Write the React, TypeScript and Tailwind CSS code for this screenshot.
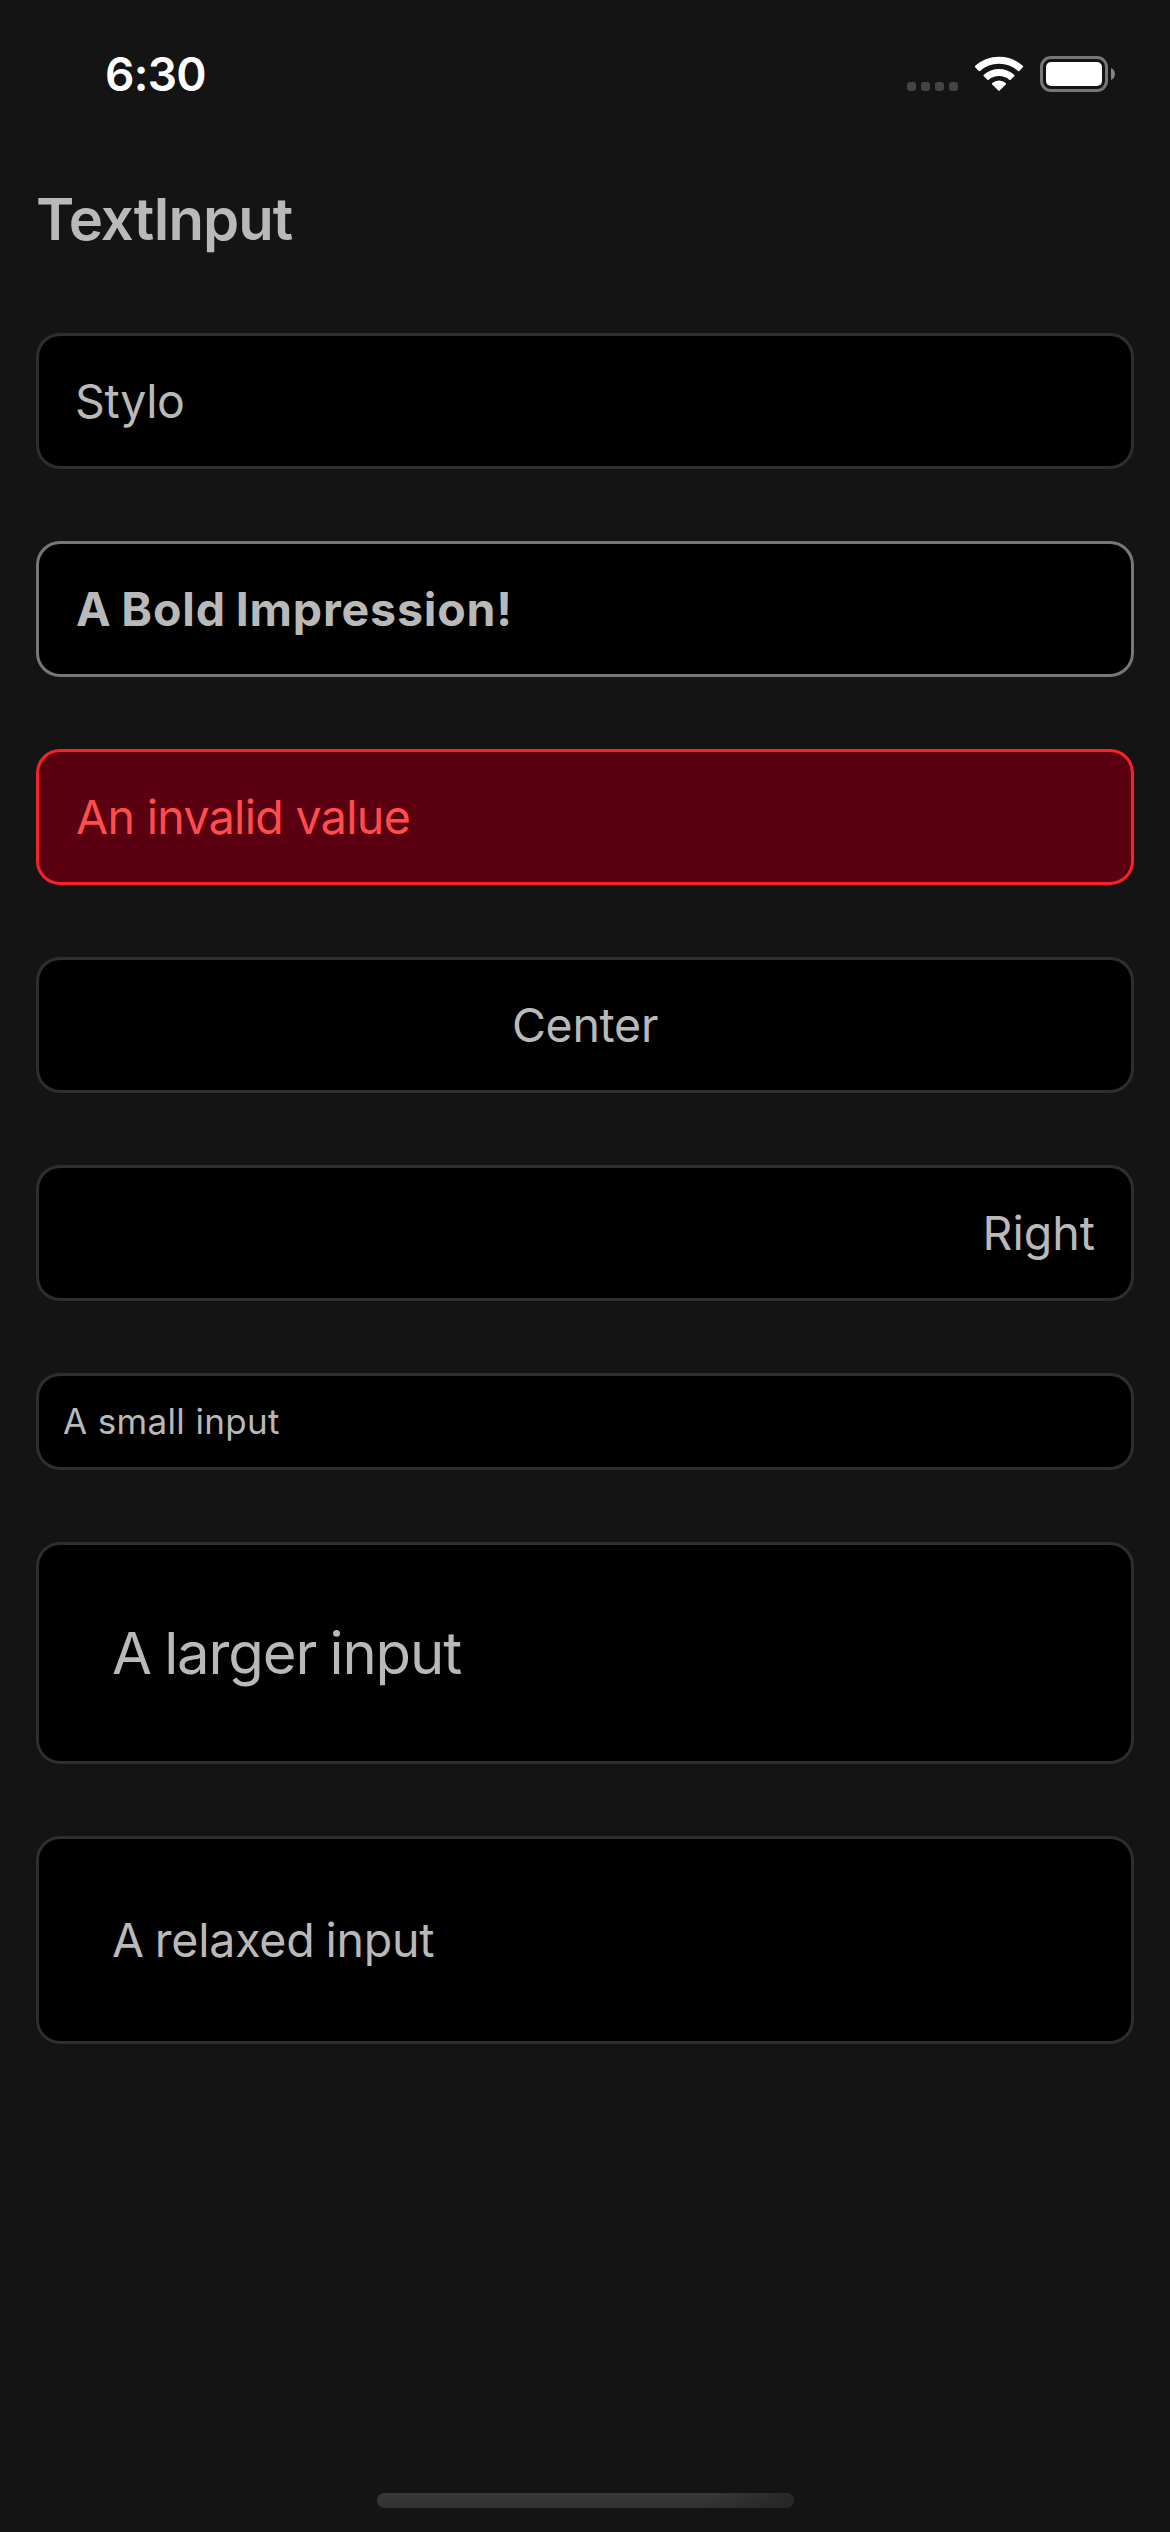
import React from "react";

interface Field {
  value: string;
  box: string;
  text: string;
}

const plain = "border-[#2e2e2e] bg-black text-[#b9b9b9]";

const fields: Field[] = [
  { value: "Stylo", box: `h-[136px] px-9 ${plain}`, text: "text-[46.5px] tracking-[-0.39px] pt-0.5" },
  {
    value: "A Bold Impression!",
    box: "h-[136px] px-9 border-[#777777] bg-black text-[#b9b9b9]",
    text: "text-[46.5px] font-bold tracking-[0.82px] [word-spacing:-2px] pl-px pt-0.5",
  },
  {
    value: "An invalid value",
    box: "h-[136px] px-9 border-[#fa202a] bg-[#5a0010] text-[#ff4d4f]",
    text: "text-[46.5px] tracking-[-0.66px] pl-px pt-0.5",
  },
  { value: "Center", box: `h-[136px] px-9 justify-center ${plain}`, text: "text-[46.5px] tracking-[-0.28px] pt-0.5" },
  { value: "Right", box: `h-[136px] px-9 justify-end ${plain}`, text: "text-[46.5px] pt-0.5" },
  { value: "A small input", box: `h-[97px] px-6 ${plain}`, text: "text-[35px] tracking-[0.35px]" },
  {
    value: "A larger input",
    box: `h-[222px] px-[72px] ${plain}`,
    text: "text-[58px] tracking-[-1.1px] [word-spacing:-2px] pl-px",
  },
  {
    value: "A relaxed input",
    box: `h-[208px] px-[72px] ${plain}`,
    text: "text-[46.5px] tracking-[-0.2px] [word-spacing:-2px] pl-px pt-0.5",
  },
];

function StatusBar() {
  return (
    <header className="flex h-[141px] items-start justify-between pl-[105px] pr-[55px] text-white">
      <div className="mt-[43px] text-[46px] font-semibold leading-[62px] tracking-[-0.69px]">6:30</div>
      <div className="mt-[54px] flex h-10 items-start">
        <div className="mt-7 flex gap-[5px]">
          <span className="size-[9px] rounded-[3px] bg-[#444444]" />
          <span className="size-[9px] rounded-[3px] bg-[#444444]" />
          <span className="size-[9px] rounded-[3px] bg-[#444444]" />
          <span className="size-[9px] rounded-[3px] bg-[#444444]" />
        </div>
        <svg
          className="ml-[15px]"
          width="52"
          height="40"
          viewBox="973 54 52 40"
          fill="#fff"
          stroke="#fff"
          strokeWidth="2"
          strokeLinejoin="round"
        >
          <path d="M975.9 66.6A34.8 34.8 0 0 1 1022.1 66.6L1018.6 70.2A29.5 29.5 0 0 0 979.4 70.2Z" />
          <path d="M984.5 75.5A22.2 22.2 0 0 1 1013.5 75.5L1009.9 79.1A16.8 16.8 0 0 0 988.1 79.1Z" />
          <path d="M992.9 83.7A9.3 9.3 0 0 1 1005.1 83.7L999 89.9Z" />
        </svg>
        <div className="ml-[15px] mt-0.5 h-9 w-[68px] rounded-[11px] border-[3px] border-[#777777] p-[3px]">
          <div className="h-full rounded-[5px] bg-white" />
        </div>
        <svg className="ml-[3px] mt-3.5" width="4" height="12" viewBox="0 0 4 12" fill="#858585">
          <path d="M0 0C5.3 2 5.3 10 0 12Z" />
        </svg>
      </div>
    </header>
  );
}

export default function App() {
  return (
    <div className="flex h-[2532px] w-[1170px] flex-col overflow-hidden bg-[#141414] font-['Inter',sans-serif]">
      <StatusBar />
      <main className="flex flex-1 flex-col px-9">
        <h1 className="mt-[42px] h-[150px] text-[58px] font-semibold leading-[72px] tracking-[-0.99px] text-[#b9b9b9]">
          TextInput
        </h1>
        <div className="flex flex-col gap-[72px]">
          {fields.map((f) => (
            <div key={f.value} className={`flex items-center rounded-[24px] border-[3px] ${f.box}`}>
              <span className={`whitespace-nowrap leading-normal ${f.text}`}>{f.value}</span>
            </div>
          ))}
        </div>
      </main>
      <footer className="flex h-[39px] justify-center">
        <div className="h-[15px] w-[417px] rounded-full bg-linear-to-b from-[#3a3a3a] to-[#303030]">
          <div className="ml-auto h-full w-[90px] rounded-r-full bg-linear-to-r from-transparent to-[#232323]/80" />
        </div>
      </footer>
    </div>
  );
}
